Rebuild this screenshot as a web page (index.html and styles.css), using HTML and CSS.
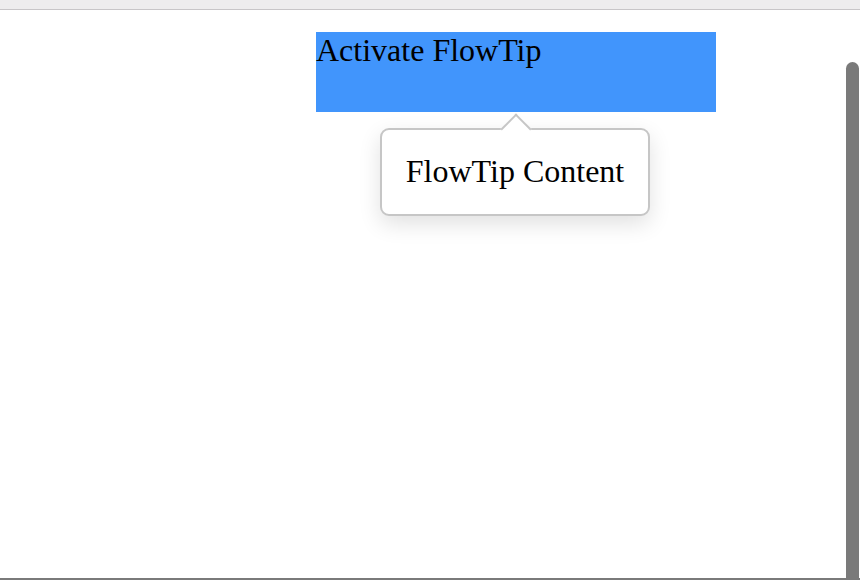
FILE: index.html
```html
<!DOCTYPE html>
<html>
<head>
<meta charset="utf-8">
<link rel="stylesheet" href="styles.css">
</head>
<body>
<div class="chrome"></div>
<main class="page">
  <div class="anchor">
    <div class="trigger">Activate FlowTip</div>
    <div class="flowtip">
      <span class="arrow"></span>
      <span class="tip-text">FlowTip Content</span>
    </div>
  </div>
</main>
<div class="scrollbar"></div>
<div class="bottom-line"></div>
</body>
</html>
```
FILE: styles.css
```css
html, body {
  margin: 0;
  padding: 0;
  width: 860px;
  height: 580px;
  overflow: hidden;
  background: #ffffff;
  font-family: "Liberation Serif", "Times New Roman", serif;
  color: #000;
}
.chrome {
  height: 9px;
  background: #eeecee;
  border-bottom: 1px solid #c8c5c8;
}
.page {
  padding: 22px 0 0 316px;
}
.anchor {
  position: relative;
  width: 400px;
}
.trigger {
  width: 400px;
  height: 80px;
  background: #4195fc;
  font-size: 32px;
  line-height: 36px;
}
.flowtip {
  position: absolute;
  top: 96px;
  left: 64px;
  width: 266px;
  height: 84px;
  border: 2px solid #c6c6c6;
  border-radius: 9px;
  background: #fff;
  box-shadow: 0 8px 22px rgba(0,0,0,0.12);
  display: flex;
  align-items: center;
  justify-content: center;
}
.tip-text {
  font-size: 32px;
  margin-top: -2px;
}
.arrow {
  position: absolute;
  top: -12px;
  left: 123px;
  width: 22px;
  height: 22px;
  background: #fff;
  border-left: 2px solid #c6c6c6;
  border-top: 2px solid #c6c6c6;
  transform: rotate(45deg);
  box-sizing: border-box;
}
.scrollbar {
  position: absolute;
  right: 1px;
  top: 62px;
  bottom: 2px;
  width: 13px;
  background: #7a7a7a;
  border-radius: 7px 7px 0 0;
}
.bottom-line {
  position: absolute;
  left: 0;
  right: 0;
  bottom: 0;
  height: 2px;
  background: #7a7a7a;
}
```
